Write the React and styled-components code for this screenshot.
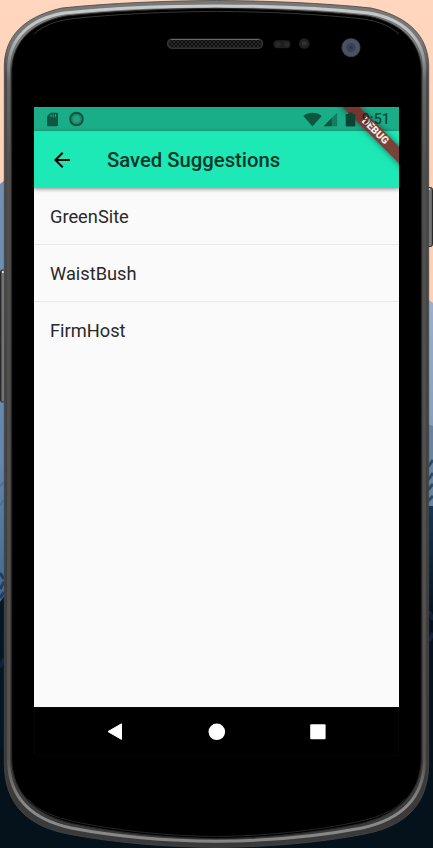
import React from "react";
import styled, { createGlobalStyle } from "styled-components";

const GlobalStyle = createGlobalStyle`
  * { box-sizing: border-box; }
  body { margin: 0; overflow: hidden; font-family: Roboto, sans-serif; }
`;

const Desktop = styled.main`
  position: relative;
  width: 433px;
  height: 848px;
  padding: 107px 34px 0;
  overflow: hidden;
`;

const Backdrop = styled.svg`
  position: absolute;
  inset: 0;
  display: block;
`;

const Screen = styled.section`
  position: relative;
  display: flex;
  flex-direction: column;
  width: 365px;
  height: 649px;
  overflow: hidden;
  background: #fafafa;
`;

const StatusBar = styled.header`
  display: flex;
  flex: 0 0 24px;
  align-items: center;
  justify-content: space-between;
  padding: 0 9px 0 12px;
  background: #1aae88;
  color: rgba(0, 12, 8, 0.64);
`;

const StatusGroup = styled.div`
  display: flex;
  align-items: center;
  gap: ${({ $gap }) => $gap}px;
`;

const BatterySlot = styled.span`
  position: relative;
  z-index: 2;
  display: flex;
  margin-left: 6px;
`;

const Clock = styled.time`
  position: relative;
  z-index: 2;
  width: 30px;
  margin-left: 4px;
  font-size: 14.4px;
  font-weight: 500;
  line-height: 24px;
  text-align: right;
  white-space: nowrap;
  transform: translateY(1px);
`;

const AppBar = styled.div`
  position: relative;
  display: flex;
  flex: 0 0 57px;
  align-items: center;
  padding-left: 16px;
  background: #1de9b6;
  box-shadow: 0 1px 4px rgba(0, 0, 0, 0.45);
`;

const BackButton = styled.button`
  display: flex;
  width: 24px;
  height: 24px;
  padding: 0;
  border: 0;
  background: none;
  color: #000;
`;

const Title = styled.h1`
  margin: 0 0 0 33px;
  font-size: 20.28px;
  font-weight: 500;
  line-height: 24px;
  color: #06352a;
`;

const NameList = styled.ul`
  flex: 1;
  margin: 0;
  padding: 0;
  list-style: none;
`;

const NameRow = styled.li`
  display: flex;
  align-items: center;
  height: 57px;
  padding: 1px 16px 0;
  font-size: 18.25px;
  color: #292929;
  border-bottom: 1px solid #e8e8e8;

  &:last-child { border-bottom-color: transparent; }
`;

const NavBar = styled.nav`
  display: flex;
  flex: 0 0 49px;
  align-items: center;
  justify-content: center;
  gap: 77px;
  background: #000;
  border: 1px solid #070707;
`;

const NavButton = styled.button`
  display: flex;
  width: 24px;
  height: 24px;
  padding: 0;
  border: 0;
  background: none;
`;

const DebugRibbon = styled.div`
  position: absolute;
  z-index: 1;
  top: 17.6px;
  left: 291.2px;
  width: 100px;
  height: 12.2px;
  background: rgba(145, 20, 25, 0.79);
  box-shadow: 0 0 6px rgba(0, 0, 0, 0.5);
  color: #f3e9e6;
  font-size: 10.35px;
  font-weight: 900;
  line-height: 12.2px;
  text-align: center;
  transform: rotate(45deg);
`;

const OUTER =
  "M4.3 65 C5 38 22 17 62 8 C110 3 165 .8 216.5 .5 C268 .8 323 3 371 8 C411 17 428 38 428.7 65 V765 C428 803 407 826 365 834 C318 843 268 847 216.5 847.5 C165 847 115 843 68 834 C26 826 5 803 4.3 765 Z";
const SHINE =
  "M8.6 67 C9.5 39 29 19 64 13 C112 8 165 6 216.5 5.9 C268 6 321 8 369 13 C404 19 423.5 39 424.4 67 V763 C423 797 403 819 362 828 C315 837 266 841 216.5 841.2 C167 841 118 837 71 828 C30 819 10 797 8.6 763 Z";
const INNER =
  "M11.7 70 C13 40 34 22 66 16 C112 11 165 8.8 216.5 8.4 C268 8.8 321 11 367 16 C399 22 420 40 421.3 70 V760 C420 793 399 815 359 824 C314 833 266 838 216.5 838.5 C167 838 119 833 74 824 C34 815 13 793 11.7 760 Z";

function PhoneBackdrop() {
  return (
    <Backdrop width="433" height="848" viewBox="0 0 433 848" aria-hidden="true">
      <defs>
        <linearGradient id="sky" x2="0" y2="1">
          <stop offset="0" stopColor="#ffd6be" />
          <stop offset="1" stopColor="#ffc39e" />
        </linearGradient>
        <linearGradient id="left" x2="0" y2="1">
          <stop offset="0" stopColor="#7391b3" />
          <stop offset=".6" stopColor="#6286ac" />
          <stop offset="1" stopColor="#355d84" />
        </linearGradient>
        <linearGradient id="right" x2="0" y2="1">
          <stop offset="0" stopColor="#9cb0cf" />
          <stop offset=".6" stopColor="#8199b9" />
          <stop offset="1" stopColor="#47698e" />
        </linearGradient>
        <linearGradient id="night" x2="0" y2="1">
          <stop offset="0" stopColor="#173653" />
          <stop offset=".45" stopColor="#05121e" />
          <stop offset="1" stopColor="#05121b" />
        </linearGradient>
        <linearGradient id="metal" x2="0" y2="1">
          <stop offset="0" stopColor="#777879" />
          <stop offset=".05" stopColor="#777" />
          <stop offset=".09" stopColor="#4b4b4b" />
          <stop offset=".9" stopColor="#3c3b3a" />
          <stop offset="1" stopColor="#3a3a3a" />
        </linearGradient>
        <linearGradient id="shine" x2="0" y2="1">
          <stop offset="0" stopColor="#c9cbcb" />
          <stop offset=".035" stopColor="#bec0c0" />
          <stop offset=".09" stopColor="#686868" />
          <stop offset=".2" stopColor="#504e4c" />
          <stop offset=".9" stopColor="#565350" />
          <stop offset=".96" stopColor="#8c8c8c" />
          <stop offset="1" stopColor="#868686" />
        </linearGradient>
        <linearGradient id="key">
          <stop offset="0" stopColor="#333" />
          <stop offset=".5" stopColor="#858585" />
          <stop offset="1" stopColor="#555" />
        </linearGradient>
        <radialGradient id="lens">
          <stop offset="0" stopColor="#242e43" />
          <stop offset=".25" stopColor="#384358" />
          <stop offset=".5" stopColor="#485263" />
          <stop offset=".85" stopColor="#4b5360" />
          <stop offset="1" stopColor="#20262d" />
        </radialGradient>
        <pattern id="mesh" width="4" height="4" patternUnits="userSpaceOnUse">
          <rect width="4" height="4" fill="#0e0e0e" />
          <path d="M0 0 2 2 4 0M0 4 2 2 4 4" stroke="#303030" strokeWidth=".8" fill="none" />
        </pattern>
      </defs>

      <rect width="433" height="848" fill="url(#sky)" />
      <path d="M0 184 5 180V650H0Z" fill="url(#left)" />
      <path d="M426 298 433 303V570H426Z" fill="url(#right)" />
      <path d="M426 424 433 426V570H426Z" fill="#69839f" />
      <path d="M0 602 6 594V750H0Z" fill="#061522" />
      <path d="M427 506H433V750H427Z" fill="url(#night)" />
      <path d="M0 486 4 482M0 505 4 500" stroke="#4d7196" strokeWidth="2" />
      <path d="M0 573 4 579M0 589 4 582M0 598 4 592" stroke="#1c3f62" strokeWidth="3" />
      <path d="M428 467 433 460M428 480 433 473M428 490 433 484M428 501 433 496" stroke="#27496c" strokeWidth="3" />
      <path d="M0 667 4 659M429 611 433 620M429 641 433 633" stroke="#10233b" strokeWidth="4" />
      <path d="M0 748H433V848H0Z" fill="#05121b" />

      <rect x=".5" y="270" width="5" height="132" rx="2" fill="url(#key)" stroke="#292929" />
      <rect x="427" y="187.5" width="5.5" height="59" rx="2" fill="url(#key)" stroke="#292929" />
      <path d="M2 272H4M428 189H430" stroke="#ddd" strokeWidth="2" />
      <path d={OUTER} fill="url(#metal)" stroke="#454545" strokeWidth=".8" />
      <path d={SHINE} fill="none" stroke="url(#shine)" strokeWidth="3" />
      <path d={INNER} fill="#000" stroke="#252525" strokeWidth="1" />
      <path
        d="M34 34C44 25 56 21 70 19 115 14 165 11.7 216.5 11.4 268 11.7 318 14 363 19 377 21 389 25 399 34"
        fill="none" stroke="#343636" strokeWidth="1"
      />
      <path
        d="M28 799C38 811 54 817 76 822 120 831 167 836 216.5 836.5 266 836 313 831 357 822 379 817 395 811 405 799"
        fill="none" stroke="#242424" strokeWidth="1"
      />

      <rect x="167.7" y="39.2" width="94.6" height="9" rx="4" fill="url(#mesh)" stroke="#333" strokeWidth="1.5" />
      <path d="M171 39.5H259" stroke="#686868" />
      <rect x="273.5" y="40.2" width="17" height="8" rx="4" fill="#1f1f20" />
      <circle cx="278" cy="44.2" r="2.5" fill="#292929" />
      <circle cx="287" cy="44.2" r="2.5" fill="#292929" />
      <circle cx="304.3" cy="43.5" r="5.3" fill="#202020" />
      <circle cx="304.3" cy="43.5" r="2.5" fill="#303030" />
      <circle cx="351" cy="47.6" r="9.7" fill="url(#lens)" />
      <circle cx="351" cy="47.6" r="4" fill="none" stroke="#323c50" />
    </Backdrop>
  );
}

const SdCardIcon = () => (
  <svg width="13" height="15" viewBox="0 0 13 15">
    <path d="M4.4.7H11a1 1 0 0 1 1 1v11.6a1 1 0 0 1-1 1H2a1 1 0 0 1-1-1V4.2Z" fill="#0c5642" />
    <path d="M5 2.2v3M7.3 2.2v3M9.6 2.2v3" stroke="#1aae88" strokeWidth="1" />
  </svg>
);

const RecordIcon = () => (
  <svg width="17" height="16" viewBox="0 0 17 16">
    <circle cx="8.5" cy="8" r="6.3" fill="#28866d" stroke="#0c5642" strokeWidth="2" />
    <circle cx="8.5" cy="8" r="3.2" fill="#1aa481" />
  </svg>
);

const WifiIcon = () => (
  <svg width="19" height="15" viewBox="0 0 19 15">
    <path d="M.4 4C5.8-.4 13.2-.4 18.6 4L9.5 14.6Z" fill="#0c5642" />
  </svg>
);

const SignalIcon = () => (
  <svg width="15" height="15" viewBox="0 0 15 15">
    <path d="M.6 14.2 14.2.6v13.6Z" fill="#167b61" />
    <path d="M.6 14.2 8.7 6.1v8.1Z" fill="#0c5642" />
  </svg>
);

const BatteryIcon = () => (
  <svg width="11" height="15" viewBox="0 0 11 15">
    <path d="M1.4 2h2V.5h4.2V2h2a.7.7 0 0 1 .7.7v11.1a.7.7 0 0 1-.7.7H1.4a.7.7 0 0 1-.7-.7V2.7a.7.7 0 0 1 .7-.7Z" fill="#0b4334" />
  </svg>
);

const names = ["GreenSite", "WaistBush", "FirmHost"];

export default function App() {
  return (
    <>
      <GlobalStyle />
      <Desktop>
        <PhoneBackdrop />
        <Screen>
          <StatusBar>
            <StatusGroup $gap={8.5}>
              <SdCardIcon />
              <RecordIcon />
            </StatusGroup>
            <StatusGroup $gap={1}>
              <WifiIcon />
              <SignalIcon />
              <StatusGroup $gap={0}>
                <BatterySlot><BatteryIcon /></BatterySlot>
                <Clock>9:51</Clock>
              </StatusGroup>
            </StatusGroup>
          </StatusBar>
          <AppBar>
            <BackButton aria-label="Back">
              <svg width="24" height="24" viewBox="0 0 24 24">
                <path fill="currentColor" d="M20 11H7.83l5.59-5.59L12 4l-8 8 8 8 1.41-1.41L7.83 13H20v-2Z" />
              </svg>
            </BackButton>
            <Title>Saved Suggestions</Title>
          </AppBar>
          <NameList>
            {names.map((name) => <NameRow key={name}>{name}</NameRow>)}
          </NameList>
          <NavBar>
            <NavButton aria-label="Back">
              <svg width="24" height="24" viewBox="0 0 24 24">
                <path d="M17.5 3.8v15.6L4 11.6Z" fill="#fff" stroke="#fff" strokeLinejoin="round" />
              </svg>
            </NavButton>
            <NavButton aria-label="Home">
              <svg width="24" height="24" viewBox="0 0 24 24"><circle cx="11.8" cy="11.8" r="8.3" fill="#fff" /></svg>
            </NavButton>
            <NavButton aria-label="Recents">
              <svg width="24" height="24" viewBox="0 0 24 24"><rect x="4.2" y="4.3" width="15.4" height="15" rx="1" fill="#fff" /></svg>
            </NavButton>
          </NavBar>
          <DebugRibbon>DEBUG</DebugRibbon>
        </Screen>
      </Desktop>
    </>
  );
}
